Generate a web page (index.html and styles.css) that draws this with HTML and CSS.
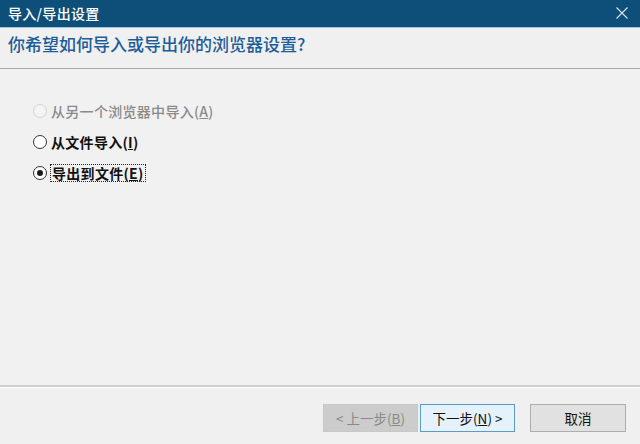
FILE: index.html
```html
<!DOCTYPE html>
<html lang="zh-CN">
<head>
<meta charset="utf-8">
<title>导入/导出设置</title>
<link rel="stylesheet" href="styles.css">
</head>
<body>
<div class="dialog">
  <div class="titlebar">
    <span class="title">导入/导出设置</span>
    <span class="close">
      <svg width="12" height="12" viewBox="0 0 12 12"><path d="M0.5 0.5 L11.5 11.5 M11.5 0.5 L0.5 11.5" stroke="#d7e6f0" stroke-width="1.1" fill="none"/></svg>
    </span>
  </div>
  <div class="header">
    <h1 class="heading">你希望如何导入或导出你的浏览器设置?</h1>
  </div>
  <div class="content">
    <div class="option disabled">
      <span class="radio"></span>
      <span class="label">从另一个浏览器中导入(<u>A</u>)</span>
    </div>
    <div class="option">
      <span class="radio"></span>
      <span class="label">从文件导入(<u>I</u>)</span>
    </div>
    <div class="option">
      <span class="radio checked"></span>
      <span class="label focus">导出到文件(<u>E</u>)</span>
    </div>
  </div>
  <div class="footer">
    <button class="btn btn-disabled">&lt; 上一步(<u>B</u>)</button>
    <button class="btn btn-default">下一步(<u>N</u>) &gt;</button>
    <button class="btn btn-cancel">取消</button>
  </div>
</div>
</body>
</html>
```
FILE: styles.css
```css
html, body {
  margin: 0;
  padding: 0;
  background: #f0f0f0;
}
.dialog {
  width: 640px;
  height: 444px;
  display: flex;
  flex-direction: column;
  font-family: "Noto Sans CJK SC", "Noto Sans", sans-serif;
  background: #f0f0f0;
  overflow: hidden;
}
.titlebar {
  height: 27px;
  flex: none;
  background: #0d4f78;
  border-bottom: 1px solid #9cc6e2;
  display: flex;
  align-items: center;
  justify-content: space-between;
  padding: 0 12px 0 8px;
}
.title {
  color: #ffffff;
  font-size: 14px;
  font-weight: 500;
  letter-spacing: 0.3px;
  line-height: 27px;
}
.close {
  display: flex;
  align-items: center;
  margin-top: -1px;
}
.header {
  height: 40px;
  flex: none;
  border-bottom: 1px solid #a8a8a8;
  box-shadow: 0 1px 0 #ffffff;
  display: flex;
  align-items: center;
  padding-left: 8px;
  background: #f0f0f0;
}
.heading {
  margin: 0;
  font-size: 17px;
  font-weight: 500;
  color: #1c5d99;
  letter-spacing: 0;
  line-height: 20px;
  margin-top: -8px;
}
.content {
  flex: 1;
  padding: 26px 0 0 33px;
  display: flex;
  flex-direction: column;
  border-bottom: 2px solid #cfcfcf;
  box-shadow: 0 1px 0 #ffffff;
  background: #f1f1f1;
}
.option {
  height: 31px;
  display: flex;
  align-items: center;
}
.radio {
  width: 12px;
  height: 12px;
  border: 1px solid #333333;
  border-radius: 50%;
  background: #ffffff;
  margin-right: 4px;
  flex: none;
  position: relative;
}
.radio.checked::after {
  content: "";
  position: absolute;
  left: 3px;
  top: 3px;
  width: 6px;
  height: 6px;
  border-radius: 50%;
  background: #1a1a1a;
}
.disabled .radio {
  border-color: #d4d4d4;
  background: #f4f4f4;
}
.label {
  font-size: 14px;
  color: #111111;
  letter-spacing: 0.3px;
  line-height: 16px;
  font-weight: 700;
}
.disabled .label {
  color: #8a8a8a;
  font-weight: 500;
}
.label u {
  text-decoration: underline;
  text-underline-offset: 1px;
}
.label.focus {
  outline: 1px dotted #222222;
  outline-offset: 0px;
  padding: 0 1px;
}
.footer {
  height: 57px;
  flex: none;
  box-sizing: border-box;
  display: flex;
  align-items: flex-start;
  padding: 17px 14px 0 323px;
}
.btn {
  height: 28px;
  width: 95px;
  font-family: "Noto Sans CJK SC", "Noto Sans", sans-serif;
  font-size: 13.5px;
  padding: 0;
  margin: 0;
  box-sizing: border-box;
  cursor: default;
}
.btn u {
  text-underline-offset: 1px;
}
.btn-disabled {
  background: #cccccc;
  border: 1px solid #c8c8c8;
  color: #8a8a8a;
}
.btn-default {
  background: #e5f1fb;
  border: 1px solid #5a9bc8;
  color: #111111;
  margin-left: 2px;
}
.btn-cancel {
  background: #e1e1e1;
  border: 1px solid #adadad;
  color: #111111;
  margin-left: 15px;
  width: 96px;
}
```
